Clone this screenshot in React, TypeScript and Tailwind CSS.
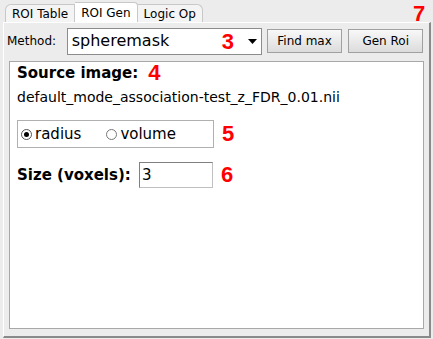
import React from "react";

const dv = { fontFamily: '"DejaVu Sans", Verdana, sans-serif' };
const red = "text-[#ff0000] font-bold text-[22px] leading-none [font-family:'Liberation_Sans',Arial,sans-serif]";

export default function App() {
  return (
    <div className="w-[433px] h-[339px] bg-[#ececec] relative overflow-hidden" style={dv}>
      {/* tab bar */}
      <div className="h-[22px] flex items-end pl-[5px] text-[12px] text-black">
        <div className="h-[18px] px-[6px] flex items-center border-l border-t border-r border-[#c8c8c8] rounded-tl-[6px] bg-[#f4f4f4]">ROI Table</div>
        <div className="h-[20px] px-[6px] flex items-center border-t border-r border-[#c8c8c8] rounded-tr-[4px] bg-[#ffffff]">ROI Gen</div>
        <div className="h-[18px] px-[6px] flex items-center border-t border-r border-[#c8c8c8] rounded-tr-[6px] bg-[#f4f4f4]">Logic Op</div>
        <div className="absolute left-[413px] top-[3px]"><span className={red}>7</span></div>
      </div>
      {/* content frame */}
      <div className="absolute left-[3px] top-[22px] w-[428px] h-[316px] border-l border-t border-[#ffffff] border-r-2 border-b-2 border-r-[#8a8a8a] border-b-[#8a8a8a] bg-[#ececec]">
        <div className="flex items-center h-[36px] pl-[3px] pr-[6px]">
          <span className="text-[12px] w-[60px]">Method:</span>
          <div className="relative w-[196px] h-[27px] border border-[#8c8c8c] bg-white flex items-center pl-[4px]">
            <span className="text-[16px]">spheremask</span>
            <span className="absolute left-[154px] top-[2px]"><span className={red}>3</span></span>
            <svg className="absolute right-[4px] top-[10px]" width="9" height="5" viewBox="0 0 9 5"><path d="M0 0H9L4.5 5Z" fill="#000" /></svg>
          </div>
          <button className="ml-[5px] w-[76px] h-[24px] border border-[#a0a0a0] bg-gradient-to-b from-[#f8f8f8] to-[#dcdcdc] text-[12px]">Find max</button>
          <button className="ml-[6px] w-[75px] h-[24px] border border-[#a0a0a0] bg-gradient-to-b from-[#f8f8f8] to-[#dcdcdc] text-[12px]">Gen Roi</button>
        </div>
        <div className="ml-[5px] mt-[2px] w-[415px] h-[268px] bg-white border border-[#a8a8a8] pl-[7px] pt-[1px]">
          <div className="flex items-center h-[20px]">
            <span className="text-[15px] font-bold">Source image:</span>
            <span className={"ml-[10px] " + red}>4</span>
          </div>
          <div className="text-[14px] mt-[4px]">default_mode_association-test_z_FDR_0.01.nii</div>
          <div className="flex items-center mt-[12px]">
            <div className="w-[197px] h-[28px] border border-[#b0b0b0] flex items-center pl-[3px] text-[15px]">
              <span className="w-[11px] h-[11px] rounded-full border border-[#555] flex items-center justify-center"><span className="w-[5px] h-[5px] rounded-full bg-black" /></span>
              <span className="ml-[3px]">radius</span>
              <span className="ml-[25px] w-[11px] h-[11px] rounded-full border border-[#777]" />
              <span className="ml-[3px]">volume</span>
            </div>
            <span className={"ml-[8px] " + red}>5</span>
          </div>
          <div className="flex items-center mt-[14px]">
            <span className="text-[15px] font-bold w-[122px]">Size (voxels):</span>
            <div className="w-[74px] h-[26px] border border-[#808080] border-r-[#c0c0c0] border-b-[#c0c0c0] bg-white text-[15px] pl-[2px] flex items-center">3</div>
            <span className={"ml-[8px] " + red}>6</span>
          </div>
        </div>
      </div>
    </div>
  );
}
